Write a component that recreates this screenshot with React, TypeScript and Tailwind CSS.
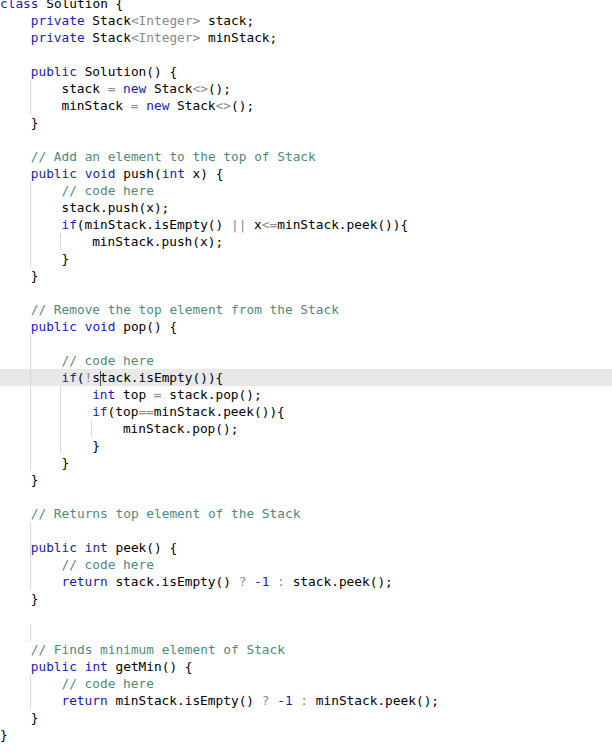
const code: [string, number[]][] = [
  ["class Solution {", []],
  ["    private Stack<Integer> stack;", []],
  ["    private Stack<Integer> minStack;", []],
  ["", []],
  ["    public Solution() {", []],
  ["        stack = new Stack<>();", [1]],
  ["        minStack = new Stack<>();", [1]],
  ["    }", []],
  ["", []],
  ["    // Add an element to the top of Stack", []],
  ["    public void push(int x) {", []],
  ["        // code here", [1]],
  ["        stack.push(x);", [1]],
  ["        if(minStack.isEmpty() || x<=minStack.peek()){", [1]],
  ["            minStack.push(x);", [1, 2]],
  ["        }", [1]],
  ["    }", []],
  ["", []],
  ["    // Remove the top element from the Stack", []],
  ["    public void pop() {", []],
  ["", [1]],
  ["        // code here", [1]],
  ["        if(!stack.isEmpty()){", [1]],
  ["            int top = stack.pop();", [1, 2]],
  ["            if(top==minStack.peek()){", [1, 2]],
  ["                minStack.pop();", [1, 2, 3]],
  ["            }", [1, 2]],
  ["        }", [1]],
  ["    }", []],
  ["", []],
  ["    // Returns top element of the Stack", []],
  ["", [1]],
  ["    public int peek() {", [1]],
  ["        // code here", [1]],
  ["        return stack.isEmpty() ? -1 : stack.peek();", [1]],
  ["    }", []],
  ["", []],
  ["", [1]],
  ["    // Finds minimum element of Stack", []],
  ["    public int getMin() {", []],
  ["        // code here", [1]],
  ["        return minStack.isEmpty() ? -1 : minStack.peek();", [1]],
  ["    }", []],
  ["}", []],
];

const tokenRe = /(\b(?:class|private|public|new|void|int|if|return)\b|-1|<Integer>|<>|\|\||<=|==|[=?:!])/;

function Tokens({ text }: { text: string }) {
  if (text.trim().startsWith("//")) {
    return <span className="text-[#4f8a7c]">{text}</span>;
  }
  const parts = text.split(tokenRe).filter((p) => p !== "");
  return (
    <>
      {parts.map((p, i) => {
        if (/^(class|private|public|new|void|int|if|return|-1)$/.test(p))
          return <span key={i} className="text-[#1a1ab4]">{p}</span>;
        if (tokenRe.test(p) && p.length <= 9)
          return <span key={i} className="text-[#8a8a8a]">{p}</span>;
        return <span key={i}>{p}</span>;
      })}
    </>
  );
}

function Line({ text, guides, active }: { text: string; guides: number[]; active: boolean }) {
  const indent = text.length - text.trimStart().length;
  const levels = Math.max(Math.floor(indent / 4), ...guides, 0);
  const rest = text.slice(levels * 4);
  // caret sits after "if(!s" on the active line
  const caretAt = 5;

  return (
    <div className={`h-[17px] flex items-stretch whitespace-pre ${active ? "bg-[#e8e8e8]" : ""}`}>
      {Array.from({ length: levels }).map((_, i) => (
        <span
          key={i}
          className={`inline-block w-[30.72px] shrink-0 ${guides.includes(i + 1) ? "border-r border-[#d9d9d9]" : ""}`}
        />
      ))}
      <span className="leading-[17px]">
        {active ? (
          <>
            <Tokens text={rest.slice(0, caretAt)} />
            <span className="inline-block w-px h-[15px] -mr-px align-middle bg-[#444]" />
            <Tokens text={rest.slice(caretAt)} />
          </>
        ) : (
          <Tokens text={rest} />
        )}
      </span>
    </div>
  );
}

export default function App() {
  return (
    <div className="w-[612px] h-[754px] overflow-hidden bg-white text-black">
      <div className="-mt-[5px] font-['DejaVu_Sans_Mono','Liberation_Mono',monospace] text-[12.8px]">
        {code.map(([text, guides], i) => (
          <Line key={i} text={text} guides={guides} active={i === 22} />
        ))}
      </div>
    </div>
  );
}
